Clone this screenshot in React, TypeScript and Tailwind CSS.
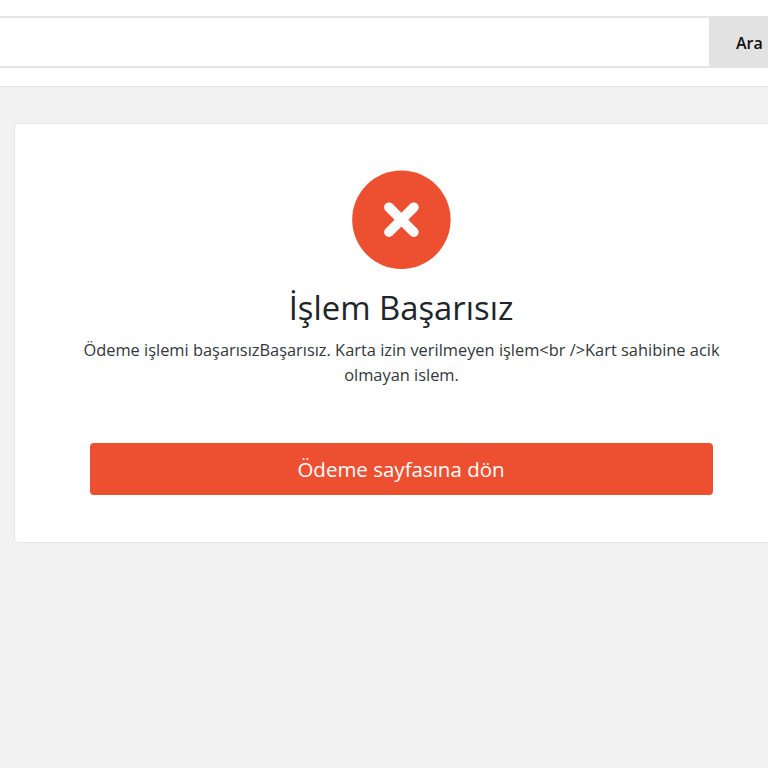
import React from 'react';

const message =
  'Ödeme işlemi başarısızBaşarısız. Karta izin verilmeyen işlem<br />Kart sahibine acik olmayan islem.';

const SearchBar: React.FC = () => (
  <header className="h-[87px] bg-white border-b border-[#e4e4e4] pt-4">
    <div className="flex h-[52px]">
      <input
        type="text"
        className="w-[709px] shrink-0 bg-white border-y-2 border-[#e4e4e4] px-4 outline-none"
      />
      <button className="grow whitespace-nowrap bg-[#e2e2e2] pt-0.5 pl-[27px] text-left text-base font-semibold text-[#111]">
        Ara
      </button>
    </div>
  </header>
);

const FailedIcon: React.FC = () => (
  <svg width="99" height="99" viewBox="0 0 99 99" className="block shrink-0">
    <circle cx="49.4" cy="49.7" r="49.2" fill="#ed5030" />
    <path
      d="M37 37.3 L61.8 62.1 M61.8 37.3 L37 62.1"
      stroke="#fff"
      strokeWidth="9.8"
      strokeLinecap="round"
    />
  </svg>
);

export default function App() {
  return (
    <div className="h-screen overflow-hidden bg-[#f2f2f2] font-['Open_Sans',sans-serif] text-[#212529]">
      <SearchBar />
      <main className="pt-[36px] pl-[14px]">
        <div className="flex h-[420px] w-[774px] flex-col items-center rounded border border-[#e6e6e6] bg-white pt-[46px] text-center">
          <FailedIcon />
          <h1 className="mt-[19px] text-[32.8px] leading-[39px]">İşlem Başarısız</h1>
          <p className="mt-[11px] w-[665px] pl-px text-[16.4px] leading-[24.6px] text-[#33373b]">{message}</p>
          <button className="mt-[56px] h-[52px] w-[623px] shrink-0 rounded bg-[#ed5030] text-[20.5px] text-white">
            Ödeme sayfasına dön
          </button>
        </div>
      </main>
    </div>
  );
}
